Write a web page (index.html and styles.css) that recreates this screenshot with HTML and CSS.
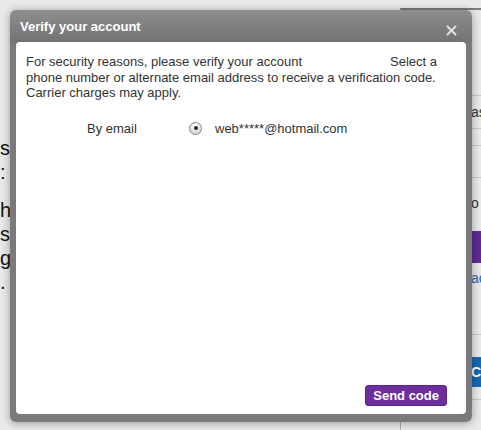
FILE: index.html
```html
<!DOCTYPE html>
<html lang="en">
<head>
    <meta charset="UTF-8">
    <meta name="viewport" content="width=device-width, initial-scale=1.0">
    <title>Verify your account</title>
    <link rel="stylesheet" href="styles.css">
</head>
<body>
    <div class="page">
        <div class="page-main">
            <p class="line l1">s <span class="hint">i</span></p>
            <p class="line l2">:</p>
            <p class="line l3">h</p>
            <p class="line l4">s,</p>
            <p class="line l5">g</p>
            <p class="line l6">.</p>
        </div>
        <div class="page-side">
            <div class="side-row r1"></div>
            <div class="side-row r2">as</div>
            <div class="side-row r3"></div>
            <div class="side-row r4"></div>
            <div class="side-row r5">o n</div>
            <div class="side-purple"></div>
            <div class="side-link">ac</div>
            <div class="side-row r6"></div>
            <div class="side-blue">Cr</div>
            <div class="side-row r7"></div>
            <div class="side-check">Check</div>
        </div>
    </div>

    <div class="dialog">
        <div class="dialog-head">
            <h1>Verify your account</h1>
            <svg class="close" width="11" height="11" viewBox="0 0 11 11">
                <path d="M1.5 1.5 L9.5 9.5 M9.5 1.5 L1.5 9.5" stroke="#e2e2e2" stroke-width="2" stroke-linecap="round"/>
            </svg>
        </div>
        <div class="dialog-body">
            <p class="intro">For security reasons, please verify your account<span class="gap"></span>Select a<br>phone number or alternate email address to receive a verification code.<br>Carrier charges may apply.</p>
            <div class="option">
                <span class="option-label">By email</span>
                <span class="radio"><span class="dot"></span></span>
                <span class="option-value">web*****@hotmail.com</span>
            </div>
            <button type="button" class="send">Send code</button>
        </div>
    </div>
</body>
</html>
```

FILE: styles.css
```css
html, body {
    margin: 0;
    height: 100%;
}
body {
    background-color: #e9e9e9;
    font-family: "Liberation Sans", Arial, sans-serif;
    overflow: hidden;
}
.page {
    display: flex;
    justify-content: space-between;
    height: 430px;
}
.page-main {
    width: 13px;
    padding-top: 136px;
}
.line {
    margin: 0;
    height: 24px;
    font-size: 20px;
    line-height: 24px;
    color: #111;
    white-space: nowrap;
}
.hint {
    color: #b88a3c;
}
.l2 { margin-bottom: 14px; }
.page-side {
    width: 80px;
    margin-top: 8px;
    border-top: 2px solid #7c7c7c;
    border-left: 1px solid #aaa;
    display: flex;
    flex-direction: column;
    font-size: 14px;
    color: #333;
}
.side-row {
    border-bottom: 1px solid #c8c8c8;
    padding-left: 70px;
}
.r1 { height: 87px; }
.r2 { height: 32px; line-height: 32px; }
.r3 { height: 16px; }
.r4 { height: 32px; }
.r5 { height: 40px; line-height: 50px; border-bottom: none; }
.side-purple {
    height: 33px;
    margin-top: 13px;
    margin-left: 66px;
    background-color: #5e2a8e;
}
.side-link {
    height: 28px;
    line-height: 30px;
    padding-left: 70px;
    color: #1c63b0;
}
.r6 { height: 44px; }
.side-blue {
    height: 30px;
    margin-top: 22px;
    margin-left: 66px;
    padding-left: 4px;
    line-height: 30px;
    background-color: #1a66b2;
    color: #fff;
    font-weight: bold;
}
.r7 { height: 12px; }
.side-check {
    padding-left: 32px;
    line-height: 30px;
    font-size: 12px;
}

.dialog {
    position: absolute;
    left: 10px;
    top: 10px;
    width: 462px;
    height: 412px;
    box-sizing: border-box;
    display: flex;
    flex-direction: column;
    padding: 0 6px 8px;
    border-radius: 6px;
    background: linear-gradient(#8e8e8e 0, #737373 32px, #7a7a7a 33px);
    box-shadow: 0 1px 8px rgba(0, 0, 0, 0.35);
}
.dialog-head {
    height: 32px;
    display: flex;
    align-items: center;
    justify-content: space-between;
    padding: 0 9px 0 4px;
}
.dialog-head > h1 {
    margin: 0;
    font-size: 13px;
    font-weight: bold;
    color: #fff;
    padding-top: 1px;
}
.close {
    margin-top: 8px;
}
.dialog-body {
    flex: 1;
    display: flex;
    flex-direction: column;
    padding: 12px 19px 8px 10px;
    background-color: #fff;
    border-radius: 4px;
    color: #333;
    font-size: 13px;
}
.intro {
    margin: 0;
    line-height: 15.5px;
    white-space: nowrap;
}
.gap {
    display: inline-block;
    width: 88px;
}
.option {
    display: flex;
    align-items: center;
    margin-top: 20px;
    padding-left: 61px;
}
.option-label {
    width: 102px;
}
.radio {
    width: 13px;
    height: 13px;
    box-sizing: border-box;
    border: 1px solid #858585;
    border-radius: 50%;
    background: radial-gradient(circle at 50% 30%, #ffffff, #c3c7d2);
    display: flex;
    align-items: center;
    justify-content: center;
    margin-right: 13px;
}
.dot {
    width: 4px;
    height: 4px;
    border-radius: 50%;
    background-color: #222;
}
.send {
    margin-top: auto;
    align-self: flex-end;
    height: 21px;
    padding: 0 7px;
    border: 1px solid #5b2383;
    border-radius: 3px;
    background-color: #6e2f9c;
    color: #fff;
    font-family: "Liberation Sans", Arial, sans-serif;
    font-size: 13px;
    font-weight: bold;
    cursor: pointer;
}
```
